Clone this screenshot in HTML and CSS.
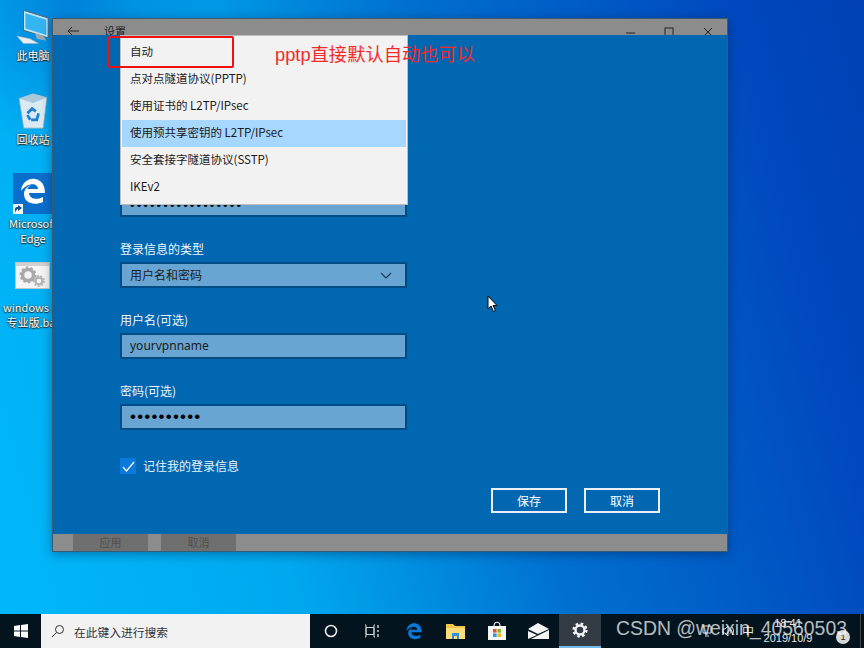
FILE: index.html
```html
<!DOCTYPE html>
<html>
<head>
  <title>VPN settings</title>
  <link rel="stylesheet" href="styles.css">
</head>
<body>
  <div class="desktop">
    <!-- desktop icons -->
    <div class="desk-icon icon-pc">
      <svg width="38" height="35" viewBox="0 0 40 36">
        <path d="M10 1 L36 9 V30 L10 22 Z" fill="#bfe6fb" stroke="#50606c" stroke-width="1"/>
        <path d="M12 4 L34 11 V27 L12 20 Z" fill="#35b4f2"/>
        <path d="M22 25 L31 28 L34 33 L24 31 Z" fill="#9aa8b2"/>
        <path d="M3 28 L17 31 L26 36 L10 36 Z" fill="#e8eef2" stroke="#9aa8b2" stroke-width="0.6"/>
      </svg>
      <span>此电脑</span>
    </div>
    <div class="desk-icon icon-bin">
      <svg width="32" height="39" viewBox="0 0 34 42">
        <path d="M2 8 L17 3 L32 7 L28 40 L7 40 Z" fill="#d9eaf3" stroke="#8aa4b4" stroke-width="0.8"/>
        <path d="M2 8 L17 13 L32 7 L17 3 Z" fill="#a9c8da"/>
        <path d="M11 24 L16 19 L20 22 M23 24 L21 31 L15 31 M11 26 L14 31" fill="none" stroke="#1f7fd0" stroke-width="3"/>
      </svg>
      <span>回收站</span>
    </div>
    <div class="edge-tile">
      <svg class="edge-e" width="28" height="28" viewBox="0 0 28 28">
        <path d="M2 14 C3 5 10 1 16 2 C23 3 26 9 26 16 H10 C10 21 17 24 24 20 V25 C15 29 5 26 5 17 C5 12 9 9 12 8 C9 10 8 12 8 12 H19 C19 6 9 5 2 14 Z" fill="#fff"/>
      </svg>
      <span class="shortcut">
        <svg width="10" height="10" viewBox="0 0 10 10"><path d="M2 9 V5 C2 3 4 3 5 3 V1 L9 4 L5 7 V5 C4 5 3 6 2 9 Z" fill="#14528f"/></svg>
      </span>
    </div>
    <div class="desk-label label-edge">Microsoft<br>Edge</div>
    <div class="bat-tile">
      <div class="bat-bar"></div>
      <svg width="33" height="22" viewBox="0 0 33 22">
        <circle cx="12" cy="9" r="5.5" fill="none" stroke="#a9a9a9" stroke-width="3.5"/>
        <circle cx="12" cy="9" r="7.5" fill="none" stroke="#a9a9a9" stroke-width="2" stroke-dasharray="2.4 2.3"/>
        <circle cx="23" cy="15" r="3.5" fill="none" stroke="#b5b5b5" stroke-width="2.5"/>
        <circle cx="23" cy="15" r="5.2" fill="none" stroke="#b5b5b5" stroke-width="1.5" stroke-dasharray="2 1.6"/>
      </svg>
    </div>
    <div class="desk-label label-bat">windows 10<br>专业版.bat</div>

    <!-- settings window -->
    <div class="window">
      <div class="titlebar">
        <svg class="back" width="12" height="10" viewBox="0 0 12 10"><path d="M12 5 H1 M5 1 L1 5 L5 9" fill="none" stroke="#222" stroke-width="1"/></svg>
        <span class="title">设置</span>
        <div class="win-btns">
          <svg width="10" height="10" viewBox="0 0 10 10"><path d="M1 6 H10" stroke="#222" stroke-width="1"/></svg>
          <svg width="10" height="10" viewBox="0 0 10 10"><rect x="1" y="1" width="8" height="8" fill="none" stroke="#222" stroke-width="1"/></svg>
          <svg width="10" height="10" viewBox="0 0 10 10"><path d="M1 1 L9 9 M9 1 L1 9" stroke="#222" stroke-width="1"/></svg>
        </div>
      </div>
      <div class="panel">
        <div class="field"><span class="dots-long">•••••••••••••••••</span></div>
        <label class="label">登录信息的类型</label>
        <div class="field select">
          <span>用户名和密码</span>
          <svg width="12" height="7" viewBox="0 0 12 7"><path d="M1 1 L6 6 L11 1" fill="none" stroke="#1d3a52" stroke-width="1.2"/></svg>
        </div>
        <label class="label">用户名(可选)</label>
        <div class="field">yourvpnname</div>
        <label class="label">密码(可选)</label>
        <div class="field"><span class="dots">••••••••••</span></div>
        <div class="remember">
          <span class="check">
            <svg width="16" height="16" viewBox="0 0 16 16"><path d="M3 9 L6.5 13 L14 4" fill="none" stroke="#fff" stroke-width="1.2"/></svg>
          </span>
          <span>记住我的登录信息</span>
        </div>
        <div class="actions">
          <div class="btn">保存</div>
          <div class="btn">取消</div>
        </div>
      </div>
      <div class="footer">
        <div class="footer-btn">应用</div>
        <div class="footer-btn">取消</div>
      </div>

      <!-- open dropdown -->
      <div class="menu">
        <div class="menu-item">自动</div>
        <div class="menu-item">点对点隧道协议(PPTP)</div>
        <div class="menu-item">使用证书的 L2TP/IPsec</div>
        <div class="menu-item selected">使用预共享密钥的 L2TP/IPsec</div>
        <div class="menu-item">安全套接字隧道协议(SSTP)</div>
        <div class="menu-item">IKEv2</div>
      </div>
    </div>

    <!-- annotation -->
    <div class="red-box"></div>
    <div class="note">pptp直接默认自动也可以</div>

    <svg class="cursor" width="12" height="18" viewBox="0 0 12 18"><path d="M1 1 V14 L4 11 L6.5 16.5 L8.5 15.5 L6 10.5 H10 Z" fill="#fff" stroke="#000" stroke-width="1"/></svg>

    <!-- taskbar -->
    <div class="taskbar">
      <div class="start">
        <svg width="14" height="14" viewBox="0 0 14 14"><path d="M0 2 L6 1 V6.5 H0 Z M7 1 L14 0 V6.5 H7 Z M0 7.5 H6 V13 L0 12 Z M7 7.5 H14 V14 L7 13 Z" fill="#fff"/></svg>
      </div>
      <div class="search">
        <svg width="14" height="14" viewBox="0 0 14 14"><circle cx="8.5" cy="5.5" r="4" fill="none" stroke="#333" stroke-width="1"/><path d="M5.5 8.5 L1 13" stroke="#333" stroke-width="1"/></svg>
        <span>在此键入进行搜索</span>
      </div>
      <div class="tray-icons">
        <div class="task-icon">
          <svg width="14" height="14" viewBox="0 0 14 14"><circle cx="7" cy="7" r="5.5" fill="none" stroke="#e8e8e8" stroke-width="1.6"/></svg>
        </div>
        <div class="task-icon">
          <svg width="16" height="14" viewBox="0 0 16 14"><path d="M1 1 H2 V13 H1 M11 1 H10 V13 H11 M2 3.5 H10 V10.5 H2 Z" fill="none" stroke="#cfd3d6" stroke-width="1"/><path d="M14 1 V4 M14 6 V8 M14 10 V13" stroke="#cfd3d6" stroke-width="1.4"/></svg>
        </div>
        <div class="task-icon">
          <svg width="18" height="18" viewBox="0 0 28 28"><path d="M2 14 C3 5 10 1 16 2 C23 3 26 9 26 16 H10 C10 21 17 24 24 20 V25 C15 29 5 26 5 17 C5 12 9 9 12 8 C9 10 8 12 8 12 H19 C19 6 9 5 2 14 Z" fill="#0a78d7"/></svg>
        </div>
        <div class="task-icon">
          <svg width="19" height="17" viewBox="0 0 19 17"><path d="M0 1 H7 L9 3 H19 V16 H0 Z" fill="#f3c544"/><path d="M0 5 H19 V16 H0 Z" fill="#fbdc7a"/><path d="M6 10 H13 V16 H11 V13 H8 V16 H6 Z" fill="#2f8fd8"/></svg>
        </div>
        <div class="task-icon">
          <svg width="20" height="20" viewBox="0 0 20 20"><path d="M7 5 C7 0 13 0 13 5" fill="none" stroke="#e8e8e8" stroke-width="1.2"/><path d="M1 5 H19 V19 H1 Z" fill="#f5f5f5"/><rect x="6" y="8" width="3.6" height="3.6" fill="#e8502a"/><rect x="10.4" y="8" width="3.6" height="3.6" fill="#7fba2a"/><rect x="6" y="12.4" width="3.6" height="3.6" fill="#1c9ee8"/><rect x="10.4" y="12.4" width="3.6" height="3.6" fill="#f7b614"/></svg>
        </div>
        <div class="task-icon">
          <svg width="21" height="16" viewBox="0 0 21 16"><path d="M0 6 L10 0 L21 6 L10 11 Z M0 8 L9 12 L0 16 Z M21 7 V16 H3 Z" fill="#f5f5f5"/></svg>
        </div>
        <div class="task-icon active">
          <svg width="16" height="16" viewBox="0 0 16 16"><circle cx="8" cy="8" r="4.5" fill="none" stroke="#f2f2f2" stroke-width="2.4"/><circle cx="8" cy="8" r="6.4" fill="none" stroke="#f2f2f2" stroke-width="2.4" stroke-dasharray="2.6 2.4"/></svg>
        </div>
      </div>
      <div class="tray">
        <svg width="10" height="12" viewBox="0 0 10 12"><path d="M1 1 H9 V8 H1 Z M3 11 H7" fill="none" stroke="#d8d8d8" stroke-width="1"/></svg>
        <svg class="tray-vol" width="12" height="12" viewBox="0 0 12 12"><path d="M1 4 H3 L6 1 V11 L3 8 H1 Z M8 3.5 C9.5 5 9.5 7 8 8.5 M10 2 C12 4.5 12 7.5 10 10" fill="none" stroke="#d8d8d8" stroke-width="1"/></svg>
        <span class="ime">中</span>
        <div class="clock"><span>18:41</span><span>2019/10/9</span></div>
        <span class="notify">1</span>
        <div class="tray-end"></div>
      </div>
    </div>
    <div class="watermark">CSDN @weixin_40560503</div>
  </div>
</body>
</html>
```
FILE: styles.css
```css
* {
  box-sizing: border-box;
}

html, body {
  margin: 0;
  height: 100%;
}

body {
  font-family: "Noto Sans CJK SC", "Liberation Sans", sans-serif;
  overflow: hidden;
}

.desktop {
  position: relative;
  width: 864px;
  height: 648px;
  overflow: hidden;
  background:
    radial-gradient(circle at 70px 0, rgba(0, 96, 200, 0.55), rgba(0, 96, 200, 0) 150px),
    linear-gradient(75deg, #00b8fa 0%, #00b0f4 16%, #00a8ee 30%, #0070d0 56%, #0048bd 88%, #0040b4 100%);
}

/* desktop icons */
.desk-icon {
  position: absolute;
  display: flex;
  flex-direction: column;
  align-items: center;
  width: 52px;
  color: #fff;
  font-size: 11px;
  line-height: 14px;
  text-shadow: 0 0 2px #222, 0 1px 1px #222;
}

.icon-pc {
  left: 7px;
  top: 9px;
  gap: 4px;
}

.icon-bin {
  left: 7px;
  top: 91px;
  gap: 2px;
}

.edge-tile {
  position: absolute;
  left: 13px;
  top: 173px;
  width: 39px;
  height: 41px;
  background: #0a6fcb;
  display: flex;
  align-items: center;
  justify-content: center;
}

.edge-e {
  margin-bottom: 5px;
}

.shortcut {
  position: absolute;
  left: 0;
  bottom: 0;
  width: 10px;
  height: 10px;
  background: #f4f4f4;
  line-height: 0;
}

.desk-label {
  position: absolute;
  color: #fff;
  font-size: 11px;
  line-height: 15px;
  text-align: center;
  white-space: nowrap;
  width: 60px;
  text-shadow: 0 0 2px #222, 0 1px 1px #222;
}

.label-edge {
  left: 3px;
  top: 216px;
}

.label-bat {
  left: 3px;
  top: 300px;
}

.bat-tile {
  position: absolute;
  left: 15px;
  top: 262px;
  width: 35px;
  height: 27px;
  background: #f4f4f4;
  border: 1px solid #c4c4c4;
  display: flex;
  flex-direction: column;
  align-items: center;
}

.bat-bar {
  width: 100%;
  height: 3px;
  flex: none;
  background: #d0d0d0;
}

/* settings window */
.window {
  position: absolute;
  left: 52px;
  top: 18px;
  width: 676px;
  height: 534px;
  display: flex;
  flex-direction: column;
  background: #0067b0;
  border: 1px solid #3c5a70;
  box-shadow: 0 2px 10px rgba(0, 20, 60, 0.4);
}

/* the bar is cut off below the middle of its controls, as in the capture */
.titlebar {
  display: flex;
  align-items: flex-start;
  flex: 0 0 16px;
  overflow: hidden;
  background: #8c8c8c;
  font-size: 11px;
  color: #222;
}

.back {
  margin-left: 14px;
  margin-top: 7px;
}

.title {
  margin-left: 25px;
  margin-top: 4px;
  line-height: 17px;
}

.win-btns {
  margin-left: auto;
  margin-right: 14px;
  margin-top: 8px;
  display: flex;
  gap: 29px;
}

.panel {
  flex: 1;
  display: flex;
  flex-direction: column;
  align-items: flex-start;
  padding: 156px 0 0 67px;
  color: #fff;
}

.field {
  width: 287px;
  height: 26px;
  display: flex;
  align-items: center;
  justify-content: space-between;
  padding: 0 13px 0 8px;
  background: #68a5d3;
  border: 2px solid #004d85;
  color: #1b1b1b;
  font-size: 12px;
  line-height: 20px;
  font-family: "Noto Sans", "Noto Sans CJK SC", sans-serif;
}

.select span {
  font-family: "Noto Sans CJK SC", sans-serif;
}

.dots {
  font-size: 17px;
  letter-spacing: 1.2px;
  color: #000;
  font-family: "Liberation Sans", sans-serif;
}

.dots-long {
  margin-top: 3px;
  font-size: 13px;
  letter-spacing: 2.1px;
  color: #111;
  font-family: "Liberation Sans", sans-serif;
}

.label {
  margin-top: 24px;
  margin-bottom: 5px;
  font-size: 12px;
  line-height: 16px;
  color: #f0f6fb;
}

.remember {
  display: flex;
  align-items: center;
  gap: 7px;
  margin-top: 28px;
  font-size: 12px;
  line-height: 16px;
  color: #eaf3fa;
}

.check {
  width: 16px;
  height: 16px;
  background: #0a78dc;
  line-height: 0;
}

.actions {
  display: flex;
  gap: 17px;
  margin-top: 14px;
  margin-left: 371px;
}

.btn {
  width: 76px;
  height: 25px;
  border: 2px solid #e8f1f8;
  font-size: 12px;
  line-height: 21px;
  text-align: center;
  color: #fff;
}

.footer {
  display: flex;
  flex: 0 0 16px;
  gap: 13px;
  padding-left: 20px;
  background: #8c8c8c;
}

.footer-btn {
  width: 75px;
  background: #6f6f6f;
  color: #505050;
  font-size: 11px;
  line-height: 17px;
  text-align: center;
}

.menu {
  position: absolute;
  left: 67px;
  top: 16px;
  width: 288px;
  height: 170px;
  padding: 3px 1px 0;
  background: #f2f2f2;
  border: 1px solid #bdbdbd;
}

.menu-item {
  height: 27px;
  padding-left: 8px;
  font-size: 11.5px;
  line-height: 25px;
  color: #1a1a1a;
  white-space: nowrap;
}

.menu-item.selected {
  background: #a6d8ff;
}

/* annotation */
.red-box {
  position: absolute;
  left: 108px;
  top: 36px;
  width: 126px;
  height: 32px;
  border: 2px solid #f01010;
  border-radius: 2px;
}

.note {
  position: absolute;
  left: 275px;
  top: 43px;
  color: #f22a2a;
  font-size: 18.3px;
  line-height: 24px;
  font-family: "Liberation Sans", "Noto Sans CJK SC", sans-serif;
  white-space: nowrap;
}

.cursor {
  position: absolute;
  left: 487px;
  top: 295px;
}

/* taskbar */
.taskbar {
  position: absolute;
  left: 0;
  right: 0;
  bottom: 0;
  height: 34px;
  display: flex;
  background: #03141f;
}

.start {
  width: 41px;
  display: flex;
  align-items: center;
  justify-content: center;
}

.search {
  width: 269px;
  display: flex;
  align-items: center;
  gap: 9px;
  padding-left: 10px;
  background: #f2f2f2;
  color: #333;
  font-size: 11.75px;
}

.tray-icons {
  display: flex;
}

.task-icon {
  width: 41.5px;
  display: flex;
  align-items: center;
  justify-content: center;
}

.task-icon.active {
  background: #333c45;
  border-bottom: 2px solid #76b9ed;
}

.tray {
  flex: 1;
  display: flex;
  align-items: center;
  justify-content: flex-end;
  color: #e6e6e6;
}

.tray-vol {
  margin-left: 10px;
}

.ime {
  margin-left: 8px;
  margin-right: 8px;
  font-size: 12px;
  line-height: 14px;
}

.clock {
  display: flex;
  flex-direction: column;
  align-items: center;
  width: 52px;
  margin-right: 22px;
  font-size: 11px;
  line-height: 15px;
  font-family: "Liberation Sans", sans-serif;
}

.notify {
  width: 14px;
  height: 14px;
  margin-top: 12px;
  margin-right: 10px;
  border-radius: 50%;
  background: #d8d8d8;
  color: #222;
  font-size: 9px;
  line-height: 14px;
  text-align: center;
  font-family: "Liberation Sans", sans-serif;
}

.tray-end {
  width: 4px;
  height: 100%;
  border-left: 1px solid #444;
}

.watermark {
  position: absolute;
  left: 616px;
  top: 616px;
  color: rgba(255, 255, 255, 0.72);
  font-family: "Liberation Sans", sans-serif;
  font-size: 19.4px;
  line-height: 24px;
  white-space: nowrap;
}
```
